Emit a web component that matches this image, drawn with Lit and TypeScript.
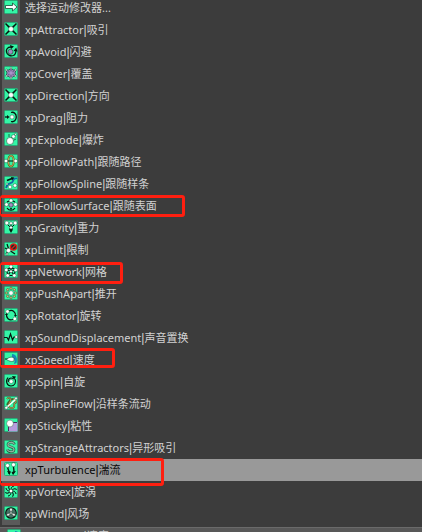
import { LitElement, html, css, svg, nothing } from "lit";
import { customElement, property } from "lit/decorators.js";

const dot = (x: number, y: number, r = 1.8) =>
  svg`<circle cx=${x} cy=${y} r=${r} fill="#fff" stroke="#123f2b" stroke-width=".4"/>`;
const line = (d: string, c = "#06150e", w = 1.3) =>
  svg`<path d=${d} fill="none" stroke=${c} stroke-width=${w}/>`;
const fill = (d: string, c = "#06150e") => svg`<path d=${d} fill=${c}/>`;

const cross = svg`${line("M1.5 1.5L12.5 12.5M12.5 1.5L1.5 12.5", "#06150e", 1.5)}
  ${fill("M3.5 5L5.500 5.500L5 3.5ZM9 3.5L8.500 5.500L10.5 5ZM3.5 9L5.500 8.500L5 10.5ZM9 10.5L8.500 8.500L10.5 9Z")}${dot(7, 7, 2.5)}`;

const glyphs: Record<string, unknown> = {
  choose: svg`<path d="M1.5 5.500H8.5V3L13 7L8.5 11V8.500H1.5Z" fill="#fff" stroke="#174a35" stroke-width=".8"/>`,
  cross,
  avoid: svg`${line("M7 3C3 3 2 6 2.500 8C3 11.500 7 12.500 9.500 11.500C11.500 10.500 12 8 12 6", "#06150e", 1.3)}
    ${fill("M6 1L10 2.500L7 5ZM9.500 7L12.200 3.500L13.500 7.500Z")}<circle cx="6.500" cy="7.800" r="2.500" fill="#a08cc0" stroke="#123f2b" stroke-width=".6"/>`,
  cover: svg`<path d="M7 2L9 4L12 4L11 7L12 10L9 10.500L7 12.500L5 10.500L2 10L3 7L2 4L5 4Z" fill="#9a82b8" stroke="#174a35" stroke-width=".7"/>
    ${line("M4 5L10 9M10 5L4 9M7 3V11", "#5d4a78", 0.7)}
    ${[[7, 2], [2.4, 4], [11.6, 4], [2.6, 10], [11.4, 10], [7, 12]].map(([x, y]) => dot(x, y, 0.9))}<circle cx="7" cy="7" r="1.800" fill="#a994c9"/>`,
  drag: svg`${line("M7 2.500C10 1.500 12.300 4 12.300 7C12.300 10 10 12.500 7 11.500", "#06150e", 1.3)}
    ${line("M1 7H4")}${fill("M3 5L5.500 7L3 9Z")}${dot(8, 7, 2)}`,
  explode: svg`${line("M7 6L12 1.500M8 9L12 7M5 5V2", "#174a35", 0.8)}
    <circle cx="6" cy="9" r="3.500" fill="#fff" stroke="#123f2b" stroke-width=".5"/>${dot(9.5, 4.5, 1.8)}${dot(11.5, 2.3, 1)}`,
  path: svg`<ellipse cx="7" cy="7" rx="2.700" ry="5.300" fill="none" stroke="#5e6e2c" stroke-width="2"/>
    <ellipse cx="7" cy="7" rx="2.700" ry="5.300" fill="none" stroke="#c9a35a" stroke-width="1"/>
    ${line("M4 7H9", "#06150e", 1)}${dot(2, 7)}${dot(11.7, 7)}`,
  spline: svg`${line("M2 12C4 5 8 9 9 5S12 3 13 2", "#1268a8", 1.8)}
    ${line("M3 4.500L8 2.500", "#06150e", 1.8)}${fill("M7 1L10.500 1.500L8 4.500Z")}${dot(6, 11)}${dot(11, 9.5)}${dot(3, 8, 1)}`,
  surface: svg`${line("M3 10C5 13 9 13 11 10M3 4L5 3M9 3L11 4", "#06150e", 1.2)}
    ${dot(7, 2.5)}${dot(2.5, 6.5)}${dot(11.5, 6.5)}<circle cx="7" cy="7" r="2.200" fill="#a48dc2" stroke="#123f2b" stroke-width=".6"/>${fill("M6 10H8L7 12.500Z")}`,
  gravity: svg`${line("M3 4L6.500 7.500M11 4L7.500 7.500M7 3V9", "#06150e", 1)}
    ${dot(2.8, 3, 1.9)}${dot(7, 3.2, 1.5)}${dot(11.2, 3, 1.9)}${fill("M5.3 8H8.7V10L7 13L5.3 10Z")}${dot(7, 7.5, 1.5)}`,
  limit: svg`${line("M3 2L5 8L2 12M5 8L11 12M1 6L5 8", "#06150e", 1.2)}${dot(4.5, 8.5, 2.2)}${dot(3, 12, 1)}
    <circle cx="9.500" cy="5" r="3.100" fill="#17382b" stroke="#e31b18" stroke-width="1.300"/>${line("M7.500 7L11.500 3", "#e31b18", 1.1)}`,
  network: svg`${line("M7 3L2.500 6L4 11.500H10L11.500 6ZM7 3V7L4 11M7 7L10 11M2.500 6L7 7L11.500 6", "#06150e", 1.1)}
    ${dot(7, 2.7)}${dot(2.3, 6)}${dot(11.7, 6)}${dot(3.7, 11.5)}${dot(10.3, 11.5)}${dot(7, 7.3, 1.4)}`,
  push: svg`${[[7, 2.3], [10.3, 3.7], [11.7, 7], [10.3, 10.3], [7, 11.7], [3.7, 10.3], [2.3, 7], [3.7, 3.7]].map(
    ([x, y]) => svg`<circle cx=${x} cy=${y} r="1.200" fill="#dcc07e" stroke="#3c6b42" stroke-width=".7"/>`)}${dot(7, 7, 2.3)}`,
  rotator: svg`${line("M5 3C8 1 12 4 11.500 8M9 11.500C5 13 2 10 2.500 6", "#06150e", 1.2)}
    ${fill("M10 7H13L11.500 9ZM1 7H4L2.500 5Z")}${dot(3.5, 3.5)}${dot(10.8, 10.8)}`,
  sound: svg`${line("M0 7.500H3L4.500 10L6.500 4L8.500 10L10 7H12", "#06150e", 1.2)}${dot(12.2, 7, 1.4)}`,
  speed: svg`${fill("M8 2C12 2 14 6 12.500 11L10 12L11 8L8 5Z", "#1689b8")}
    ${line("M1 7H5", "#06150e", 1)}<path d="M2.500 7.500C5 5 8 4.500 10 6V9C7 10 5 9 2.500 7.500Z" fill="#fff" stroke="#174a35" stroke-width=".6"/>`,
  spin: svg`${line("M4 3.500C1 7 3 12 7 12S12.500 8 11 5M9 4.500C6 3 3.500 5.500 4.500 8", "#06150e", 1.1)}
    ${fill("M8 2L12 2.500L10 6Z")}${dot(7.2, 7.5, 2)}`,
  flow: svg`${line("M3 3C5 0 8 3 6 6S4 12 8 12S9 7 11 7S12 3 9 3S4 7 3 9", "#46612e", 1.8)}
    ${line("M3 3C5 0 8 3 6 6S4 12 8 12S9 7 11 7S12 3 9 3", "#c59e5d", 1)}${line("M2 12L12 3", "#fff", 1.3)}${dot(2.3, 11.7, 1.5)}${dot(12, 2.3, 1.3)}`,
  sticky: svg`<path d="M4 13.500V8L8 4H13.500V13.500Z" fill="#b99add"/>${line("M4.500 13V8M8 4.500H13", "#37244a", 0.9)}
    ${dot(6, 5.5, 3.4)}`,
  strange: svg`${line("M10.500 4.500C9 1 3.500 2 4 5C4.500 7.500 10 6.500 10 9.500C10 12.500 4 12.500 3.500 9.500", "#24533f", 2.6)}
    ${line("M10.500 4.500C9 1 3.500 2 4 5C4.500 7.500 10 6.500 10 9.500C10 12.500 4 12.500 3.500 9.500", "#8db39f", 1.3)}`,
  turbulence: svg`${line("M4 5C3 8 6 8 5 12M10 3C8 7 12 9 9 12", "#06150e", 1.4)}
    ${fill("M3 9L7 9.500L5.500 13ZM7.500 10L12 9L9 13Z")}${dot(3.5, 3.5, 2)}${dot(9.5, 2.7, 2)}`,
  vortex: svg`${[0, 45, 90, 135, 180, 225, 270, 315].map(
    (a) => svg`<path d="M7 6C7 4 8 2 10 2" transform="rotate(${a} 7 7)" fill="none" stroke="#06150e" stroke-width="1"/>`)}${dot(7, 7, 1.7)}`,
  wind: svg`<circle cx="7" cy="7" r="5.300" fill="#477264" stroke="#06150e" stroke-width="1.100"/>
    ${[0, 120, 240].map((a) => svg`<path d="M7 7L5.500 3.500L7 1.500L8.500 3.500Z" transform="rotate(${a} 7 7)" fill="#eee" stroke="#14271e" stroke-width=".5"/>`)}${dot(7, 7, 1)}`,
};

@customElement("modifier-icon")
class ModifierIcon extends LitElement {
  @property() name = "cross";
  static styles = css`
    :host { display: block; width: 14px; height: 14px; }
    .tile { display: block; width: 100%; height: 100%; }
  `;
  render() {
    return html`<svg class="tile" viewBox="0 0 14 14" aria-hidden="true">
      <rect x=".5" y=".5" width="13" height="13" rx="1" fill="#34f5a6" stroke="#28a977"/>
      ${glyphs[this.name]}
    </svg>`;
  }
}

interface Item {
  icon: string;
  latin?: string;
  label: string;
  mark?: string;
  selected?: boolean;
}

const items: Item[] = [
  { icon: "choose", label: "选择运动修改器..." },
  { icon: "cross", latin: "xpAttractor", label: "吸引" },
  { icon: "avoid", latin: "xpAvoid", label: "闪避" },
  { icon: "cover", latin: "xpCover", label: "覆盖" },
  { icon: "cross", latin: "xpDirection", label: "方向" },
  { icon: "drag", latin: "xpDrag", label: "阻力" },
  { icon: "explode", latin: "xpExplode", label: "爆炸" },
  { icon: "path", latin: "xpFollowPath", label: "跟随路径" },
  { icon: "spline", latin: "xpFollowSpline", label: "跟随样条" },
  { icon: "surface", latin: "xpFollowSurface", label: "跟随表面", mark: "surface" },
  { icon: "gravity", latin: "xpGravity", label: "重力" },
  { icon: "limit", latin: "xpLimit", label: "限制" },
  { icon: "network", latin: "xpNetwork", label: "网格", mark: "network" },
  { icon: "push", latin: "xpPushApart", label: "推开" },
  { icon: "rotator", latin: "xpRotator", label: "旋转" },
  { icon: "sound", latin: "xpSoundDisplacement", label: "声音置换" },
  { icon: "speed", latin: "xpSpeed", label: "速度", mark: "speed" },
  { icon: "spin", latin: "xpSpin", label: "自旋" },
  { icon: "flow", latin: "xpSplineFlow", label: "沿样条流动" },
  { icon: "sticky", latin: "xpSticky", label: "粘性" },
  { icon: "strange", latin: "xpStrangeAttractors", label: "异形吸引" },
  { icon: "turbulence", latin: "xpTurbulence", label: "湍流", mark: "turbulence", selected: true },
  { icon: "vortex", latin: "xpVortex", label: "旋涡" },
  { icon: "wind", latin: "xpWind", label: "风场" },
];

@customElement("app-root")
class AppRoot extends LitElement {
  static styles = css`
    :host {
      display: flex;
      flex-direction: column;
      height: 100vh;
      overflow: hidden;
      background: #3c3c3c;
      color: #d2d2d2;
      font: 11px/22px "Noto Sans", "Noto Sans CJK SC", sans-serif;
    }
    .menu { flex: none; margin: -3px 0 0; padding: 0 0 2px; list-style: none; }
    .item { position: relative; }
    .row {
      display: flex;
      width: 100%;
      height: 22px;
      margin: 0;
      padding: 0 0 0 2px;
      border: 0;
      background: none;
      color: inherit;
      font: inherit;
      text-align: left;
      white-space: nowrap;
    }
    .gutter { flex: none; width: 18px; padding: 3px 2px 5px; box-sizing: border-box; background: #5a5a5a; }
    .text { margin-left: 5px; }
    .bar { font-family: "Liberation Sans", sans-serif; font-size: 12px; }
    .selected { background: #999; color: #080808; }
    .selected .gutter { background: #999; }
    .mark {
      position: absolute;
      z-index: 1;
      left: 0;
      top: -2px;
      height: 22px;
      box-sizing: border-box;
      border: 3px solid #ff1f10;
      border-left-width: 1px;
      border-radius: 3px;
      pointer-events: none;
    }
    .mark.surface { width: 185px; top: 0; }
    .mark.network { width: 123px; top: 1px; }
    .mark.speed { width: 115px; top: -1px; height: 20px; }
    .mark.turbulence { width: 164px; top: -1px; height: 28px; }
    .field {
      display: flex;
      flex: none;
      width: 100%;
      height: 22px;
      padding: 1px 0 0 7px;
      gap: 18px;
      box-sizing: border-box;
      border: 0;
      border-top: 1px solid #6a6a6a;
      background: #585858;
      color: #d2d2d2;
      font: inherit;
      line-height: 14px;
      text-align: left;
    }
  `;

  private name(item: Item) {
    return html`<span class="text">${item.latin ? html`${item.latin}<span class="bar">|</span>` : nothing}${item.label}</span>`;
  }

  render() {
    return html`
      <ul class="menu">
        ${items.map((item) => html`<li class="item">
          <button class="row ${item.selected ? "selected" : ""}">
            <span class="gutter"><modifier-icon name=${item.icon}></modifier-icon></span>${this.name(item)}
          </button>
          ${item.mark ? html`<span class="mark ${item.mark}"></span>` : nothing}
        </li>`)}
      </ul>
      <button class="field">
        <modifier-icon name="speed"></modifier-icon>
        <span>xpSpeed<span class="bar">|</span>速度</span>
      </button>
    `;
  }
}
